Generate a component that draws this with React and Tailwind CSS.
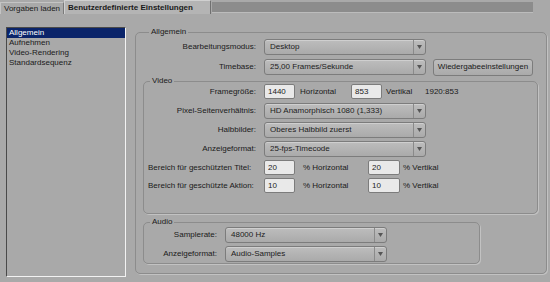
import React from "react";

const Select = ({ value, w = "w-[162px]" }) => (
  <div className={`flex h-[16px] ${w} items-stretch rounded-[3px] border border-[#7c7c7c] bg-gradient-to-b from-[#bdbdbd] to-[#aaaaaa] shadow-[inset_0_1px_0_#cfcfcf]`}>
    <div className="flex flex-1 items-center px-[5px] text-[#1c1c1c]">{value}</div>
    <div className="flex w-[12px] items-center justify-center border-l border-[#8a8a8a]">
      <svg width="5" height="4" viewBox="0 0 5 4">
        <path d="M0 0H5L2.5 4Z" fill="#555" />
      </svg>
    </div>
  </div>
);

const Input = ({ value, w = "w-[31px]" }) => (
  <div className={`flex h-[15px] ${w} items-center rounded-[2px] border border-[#7c7c7c] bg-[#e9e9e9] px-[3px] text-[#1c1c1c]`}>
    {value}
  </div>
);

const Label = ({ children, w = "w-[120px]", left }) => (
  <div className={`${w} shrink-0 ${left ? "pl-[4px] text-left" : "pr-[8px] text-right"} whitespace-nowrap`}>
    {children}
  </div>
);

const Group = ({ title, className, children }) => (
  <fieldset className={`rounded-[5px] border border-[#8c8c8c] shadow-[1px_1px_0_#c2c2c2] ${className}`}>
    <legend className="ml-[6px] px-[2px] leading-[6px]">{title}</legend>
    {children}
  </fieldset>
);

export default function App() {
  const items = ["Allgemein", "Aufnehmen", "Video-Rendering", "Standardsequenz"];

  return (
    <div className="h-[282px] w-[550px] overflow-hidden bg-[#a9a9a9] font-['Liberation_Sans',Arial,sans-serif] text-[8px] text-[#1a1a1a]">
      {/* tabs */}
      <div className="flex h-[14px] items-end">
        <div className="flex h-[12px] w-[64px] items-center border-l border-r border-t border-[#c4c4c4] border-r-[#7a7a7a] pl-[3px] leading-none">
          Vorgaben laden
        </div>
        <div className="flex h-[14px] w-[147px] items-center border-l border-r border-t border-[#d0d0d0] border-r-[#707070] bg-[#b4b4b4] pl-[3px] font-bold leading-none">
          Benutzerdefinierte Einstellungen
        </div>
        <div className="mb-[1px] ml-[1px] h-[11px] w-[321px] self-start mt-[2px] border-b border-[#bcbcbc] bg-[#8c8c8c]" />
      </div>

      <div className="flex">
        {/* list */}
        <div className="ml-[6px] mt-[13px] h-[250px] w-[120px] border-l border-t border-[#4a4a4a] border-b-[#f2f2f2] border-r-[#f2f2f2] border-b border-r">
          {items.map((it, i) => (
            <div
              key={it}
              className={`flex h-[10px] items-center pl-[2px] leading-none ${i === 0 ? "bg-[#0a246a] text-white" : ""}`}
            >
              {it}
            </div>
          ))}
        </div>

        {/* settings */}
        <Group title="Allgemein" className="ml-[9px] mt-[15px] h-[245px] w-[412px] pl-[7px] pt-[4px]">
          <div className="flex h-[16px] items-center">
            <Label w="w-[121px]">Bearbeitungsmodus:</Label>
            <Select value="Desktop" />
          </div>
          <div className="mt-[4px] flex h-[16px] items-center">
            <Label w="w-[121px]">Timebase:</Label>
            <Select value="25,00 Frames/Sekunde" />
            <div className="ml-[7px] flex h-[17px] w-[100px] items-center justify-center rounded-[3px] border border-[#7c7c7c] bg-gradient-to-b from-[#bdbdbd] to-[#aaaaaa]">
              Wiedergabeeinstellungen
            </div>
          </div>

          <Group title="Video" className="mt-[3px] h-[136px] w-[395px]">
            <div className="flex h-[15px] items-center">
              <Label>Framegröße:</Label>
              <Input value="1440" />
              <span className="ml-[5px] w-[51px]">Horizontal</span>
              <Input value="853" />
              <span className="ml-[4px] w-[39px]">Vertikal</span>
              <span>1920:853</span>
            </div>
            <div className="mt-[4px] flex h-[16px] items-center">
              <Label>Pixel-Seitenverhältnis:</Label>
              <Select value="HD Anamorphisch 1080 (1,333)" />
            </div>
            <div className="mt-[3px] flex h-[16px] items-center">
              <Label>Halbbilder:</Label>
              <Select value="Oberes Halbbild zuerst" />
            </div>
            <div className="mt-[3px] flex h-[16px] items-center">
              <Label>Anzeigeformat:</Label>
              <Select value="25-fps-Timecode" />
            </div>
            <div className="mt-[3px] flex h-[15px] items-center">
              <Label left>Bereich für geschützten Titel:</Label>
              <Input value="20" />
              <span className="ml-[8px] w-[65px]">% Horizontal</span>
              <Input value="20" w="w-[32px]" />
              <span className="ml-[3px]">% Vertikal</span>
            </div>
            <div className="mt-[3px] flex h-[15px] items-center">
              <Label left>Bereich für geschützte Aktion:</Label>
              <Input value="10" />
              <span className="ml-[8px] w-[65px]">% Horizontal</span>
              <Input value="10" w="w-[32px]" />
              <span className="ml-[3px]">% Vertikal</span>
            </div>
          </Group>

          <Group title="Audio" className="mt-[5px] h-[45px] w-[337px] pt-[2px]">
            <div className="flex h-[16px] items-center">
              <Label w="w-[81px]">
                <span className="pr-[-3px]">Samplerate:</span>
              </Label>
              <Select value="48000 Hz" />
            </div>
            <div className="mt-[3px] flex h-[16px] items-center">
              <Label w="w-[81px]">Anzeigeformat:</Label>
              <Select value="Audio-Samples" />
            </div>
          </Group>
        </Group>
      </div>
    </div>
  );
}
